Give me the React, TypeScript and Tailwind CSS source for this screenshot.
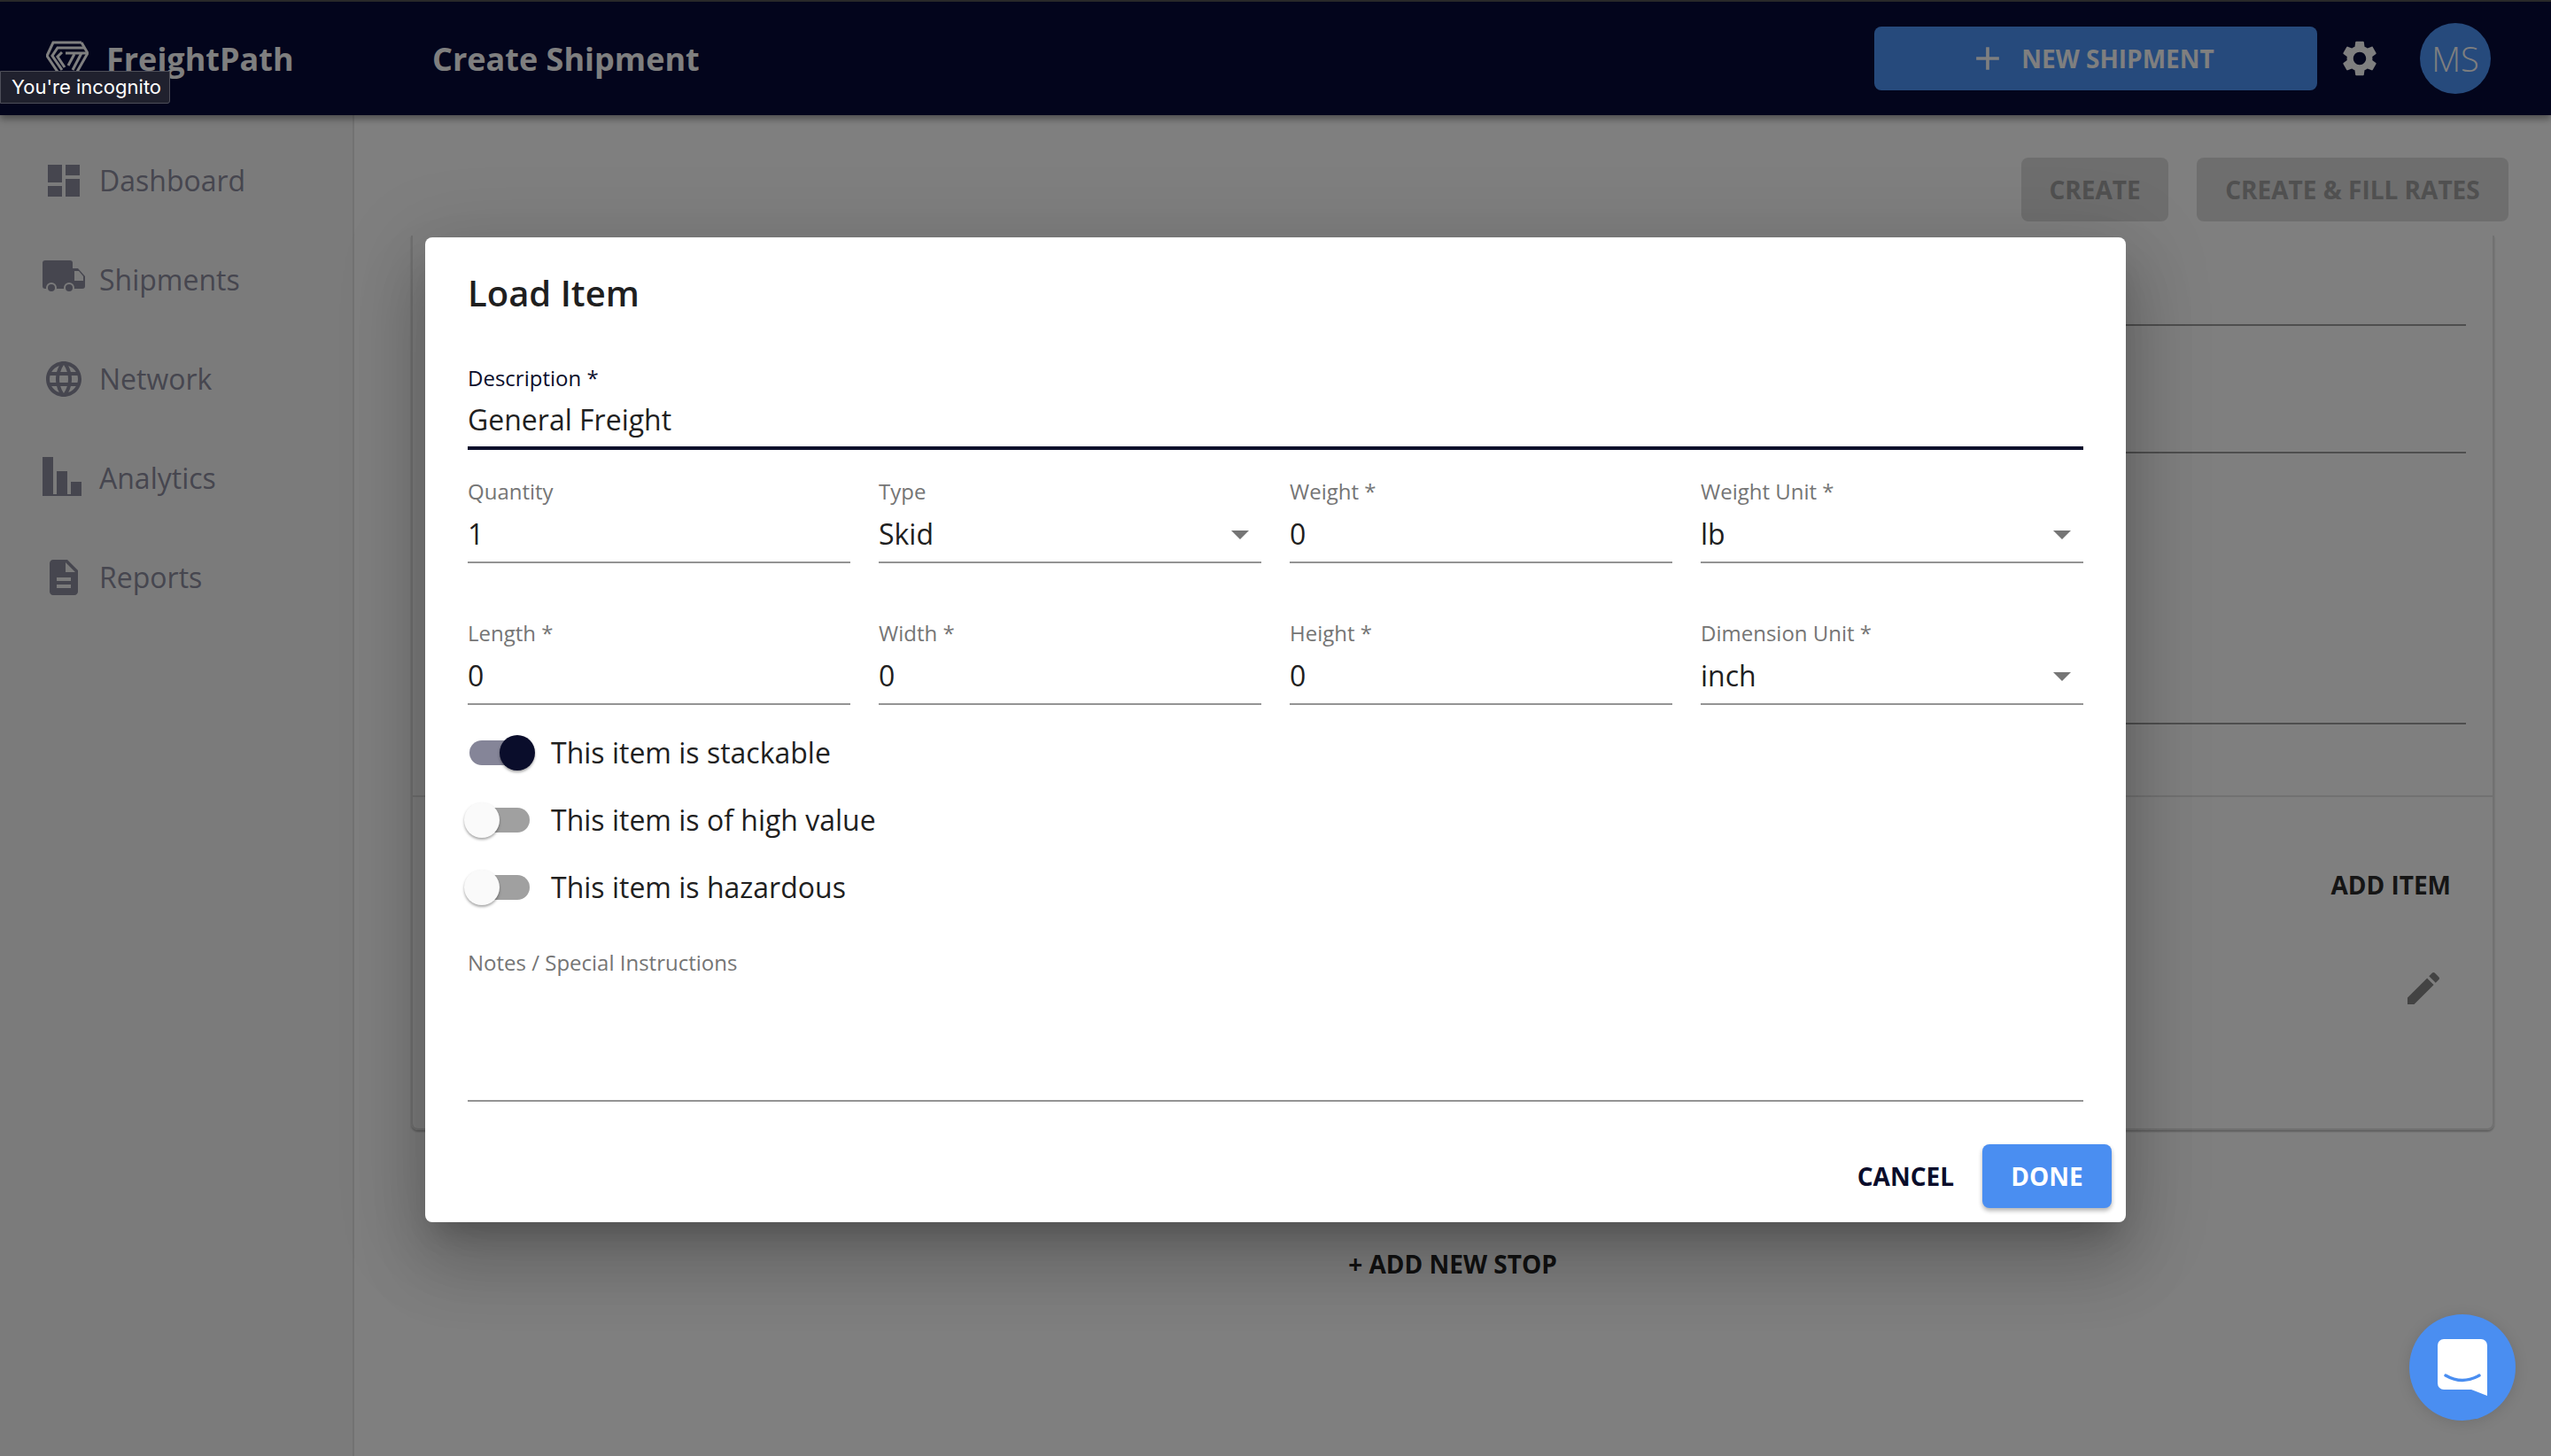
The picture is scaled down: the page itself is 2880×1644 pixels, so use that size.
import React from "react";

const navItems = [
  { label: "Dashboard", icon: <DashboardIcon /> },
  { label: "Shipments", icon: <TruckIcon /> },
  { label: "Network", icon: <GlobeIcon /> },
  { label: "Analytics", icon: <BarsIcon /> },
  { label: "Reports", icon: <ReportIcon /> },
];

function DashboardIcon() {
  return (
    <svg viewBox="0 0 24 24" className="w-12 h-12 fill-[#8c8c9e]">
      <path d="M3 13h8V3H3v10zm0 8h8v-6H3v6zm10 0h8V11h-8v10zm0-18v6h8V3h-8z" />
    </svg>
  );
}

function TruckIcon() {
  return (
    <svg viewBox="0 0 48 48" className="w-12 h-12 fill-[#8c8c9e]">
      <g transform="translate(0 2)">
        <path d="M3 0h28a3 3 0 0 1 3 3v29H3a3 3 0 0 1-3-3V3a3 3 0 0 1 3-3z" />
        <path fillRule="evenodd" d="M34 9h6l8 9v11a3 3 0 0 1-3 3H34V9zm2 3v11h10v-5l-5-6h-5z" />
        <circle cx="10" cy="31" r="6" className="fill-[#f6f6f6]" />
        <circle cx="30" cy="31" r="6" className="fill-[#f6f6f6]" />
        <circle cx="10" cy="31" r="4" />
        <circle cx="30" cy="31" r="4" />
      </g>
    </svg>
  );
}

function GlobeIcon() {
  return (
    <svg viewBox="0 0 24 24" className="w-12 h-12 fill-[#8c8c9e]">
      <path d="M11.99 2C6.47 2 2 6.48 2 12s4.47 10 9.99 10C17.52 22 22 17.52 22 12S17.52 2 11.99 2zm6.93 6h-2.95c-.32-1.25-.78-2.45-1.38-3.56 1.84.63 3.37 1.91 4.33 3.56zM12 4.04c.83 1.2 1.48 2.53 1.91 3.96h-3.82c.43-1.43 1.08-2.76 1.91-3.96zM4.26 14C4.1 13.36 4 12.69 4 12s.1-1.36.26-2h3.38c-.08.66-.14 1.32-.14 2 0 .68.06 1.34.14 2H4.26zm.82 2h2.95c.32 1.25.78 2.45 1.38 3.56-1.84-.63-3.37-1.9-4.33-3.56zm2.95-8H5.08c.96-1.66 2.49-2.93 4.33-3.56C8.81 5.55 8.35 6.75 8.03 8zM12 19.96c-.83-1.2-1.48-2.53-1.91-3.96h3.82c-.43 1.43-1.08 2.76-1.91 3.96zM14.34 14H9.66c-.09-.66-.16-1.32-.16-2 0-.68.07-1.35.16-2h4.68c.09.65.16 1.32.16 2 0 .68-.07 1.34-.16 2zm.25 5.56c.6-1.11 1.06-2.31 1.38-3.56h2.95c-.96 1.65-2.49 2.93-4.33 3.56zM16.36 14c.08-.66.14-1.32.14-2 0-.68-.06-1.34-.14-2h3.38c.16.64.26 1.31.26 2s-.1 1.36-.26 2h-3.38z" />
    </svg>
  );
}

function BarsIcon() {
  return (
    <svg viewBox="0 0 48 48" className="w-12 h-12 fill-[#8c8c9e]">
      <path d="M0 0h12v42h4V16h12v26h4V28h12v16H0z" />
    </svg>
  );
}

function ReportIcon() {
  return (
    <svg viewBox="0 0 24 24" className="w-12 h-12 fill-[#8c8c9e]">
      <path d="M14 2H6c-1.1 0-1.99.9-1.99 2L4 20c0 1.1.89 2 1.99 2H18c1.1 0 2-.9 2-2V8l-6-6zm2 16H8v-2h8v2zm0-4H8v-2h8v2zm-3-5V3.5L18.5 9H13z" />
    </svg>
  );
}

function Logo() {
  return (
    <svg viewBox="0 0 48 40" className="w-12 h-10 fill-none stroke-white" strokeWidth="3">
      <path d="M40 2H8L1 17L13 35" />
      <path d="M43 8H13L7 17L18 33" />
      <path d="M18 13L13 18L21 30" />
      <path d="M40 2L47 14L35 35" />
      <path d="M22 14H47" />
      <path d="M40 14L30 33" />
      <path d="M32 15L25 28" />
    </svg>
  );
}

function Field({ label, value, select }: { label: string; value: string; select?: boolean }) {
  return (
    <div className="flex flex-col border-b-2 border-[#949494]">
      <div className="text-[24px] leading-[30px] text-[#757575]">{label}</div>
      <div className="mt-[11px] mb-[9px] h-[44px] flex items-center justify-between text-[32px] leading-[44px] text-[#1f1f1f]">
        <span>{value}</span>
        {select && (
          <svg viewBox="0 0 24 24" className="w-12 h-12 fill-[#757575] shrink-0">
            <path d="M7 10l5 5 5-5z" />
          </svg>
        )}
      </div>
    </div>
  );
}

function Toggle({ label, on }: { label: string; on?: boolean }) {
  return (
    <div className="h-[76px] flex items-center">
      <div className="relative w-[94px] h-[40px] shrink-0">
        <div className={`absolute left-[2px] top-[6px] w-[68px] h-[28px] rounded-full ${on ? "bg-[#858598]" : "bg-[#a0a0a0]"}`} />
        <div
          className={`absolute top-0 w-[40px] h-[40px] rounded-full shadow-[0_2px_3px_rgba(0,0,0,0.35)] ${
            on ? "left-[36px] bg-[#0a0d2b]" : "-left-[4px] bg-[#fafafa]"
          }`}
        />
      </div>
      <span className="text-[32px] leading-[44px] text-[#1f1f1f]">{label}</span>
    </div>
  );
}

function LoadItemDialog() {
  return (
    <div className="absolute inset-0 flex justify-center pt-[268px]">
      <div className="w-[1920px] h-[1112px] bg-white rounded-lg shadow-[0_22px_30px_-14px_rgba(0,0,0,0.2),0_48px_76px_6px_rgba(0,0,0,0.14),0_18px_92px_16px_rgba(0,0,0,0.12)]">
        <div className="px-12 pt-[35px]">
          <h2 className="text-[40px] leading-[56px] font-semibold text-[#1f1f1f]">Load Item</h2>

          <div className="mt-[52px] flex flex-col border-b-4 border-[#0a0d2b]">
            <div className="text-[24px] leading-[32px] text-[#0a0d2b]">Description *</div>
            <div className="mt-[9px] mb-2 text-[32px] leading-[44px] text-[#1f1f1f]">General Freight</div>
          </div>

          <div className="mt-8 grid grid-cols-4 gap-x-8 gap-y-16">
            <Field label="Quantity" value="1" />
            <Field label="Type" value="Skid" select />
            <Field label="Weight *" value="0" />
            <Field label="Weight Unit *" value="lb" select />
            <Field label="Length *" value="0" />
            <Field label="Width *" value="0" />
            <Field label="Height *" value="0" />
            <Field label="Dimension Unit *" value="inch" select />
          </div>

          <div className="mt-4 flex flex-col">
            <Toggle label="This item is stackable" on />
            <Toggle label="This item is of high value" />
            <Toggle label="This item is hazardous" />
          </div>

          <div className="mt-8 h-[172px] border-b-2 border-[#949494] text-[24px] leading-[30px] text-[#757575]">
            Notes / Special Instructions
          </div>
        </div>

        <div className="mt-12 px-4 flex justify-end items-center">
          <button className="px-8 h-[72px] text-[28px] font-bold text-[#0a0d2b]">CANCEL</button>
          <button className="w-[146px] h-[72px] rounded-lg bg-[#4a8ef1] text-[28px] font-bold text-white shadow-[0_3px_5px_rgba(0,0,0,0.3)]">
            DONE
          </button>
        </div>
      </div>
    </div>
  );
}

export default function App() {
  return (
    <div className="relative w-[2880px] h-[1644px] overflow-hidden bg-white font-['Open_Sans',sans-serif]">
      <div className="h-[2px] bg-[#2b2b2b]" />
      <header className="relative h-[128px] bg-[#060a38] flex items-center pl-[52px] pr-[68px] shadow-[0_4px_8px_rgba(0,0,0,0.4)] z-10">
        <Logo />
        <span className="ml-[20px] w-[368px] pt-[2px] text-[36px] font-bold text-white">FreightPath</span>
        <span className="pt-[2px] text-[36px] font-bold text-white">Create Shipment</span>
        <div className="ml-auto flex items-center">
          <button className="w-[500px] h-[72px] pr-[10px] rounded-lg bg-[#4c94f8] flex items-center justify-center gap-[16px] text-[28px] font-bold text-white">
            <svg viewBox="0 0 24 24" className="w-[44px] h-[44px] fill-white">
              <path d="M19 13h-6v6h-2v-6H5v-2h6V5h2v6h6v2z" />
            </svg>
            NEW SHIPMENT
          </button>
          <svg viewBox="0 0 24 24" className="ml-6 w-12 h-12 fill-white">
            <path d="M19.14 12.94c.04-.3.06-.61.06-.94 0-.32-.02-.64-.07-.94l2.03-1.58c.18-.14.23-.41.12-.61l-1.92-3.32c-.12-.22-.37-.29-.59-.22l-2.39.96c-.5-.38-1.03-.7-1.62-.94l-.36-2.54c-.04-.24-.24-.41-.48-.41h-3.84c-.24 0-.43.17-.47.41l-.36 2.54c-.59.24-1.13.57-1.62.94l-2.39-.96c-.22-.08-.47 0-.59.22L2.74 8.87c-.12.21-.08.47.12.61l2.03 1.58c-.05.3-.09.63-.09.94s.02.64.07.94l-2.03 1.58c-.18.14-.23.41-.12.61l1.92 3.32c.12.22.37.29.59.22l2.39-.96c.5.38 1.03.7 1.62.94l.36 2.54c.05.24.24.41.48.41h3.84c.24 0 .44-.17.47-.41l.36-2.54c.59-.24 1.13-.56 1.62-.94l2.39.96c.22.08.47 0 .59-.22l1.92-3.32c.12-.22.07-.47-.12-.61l-2.01-1.58zM12 15.6c-1.98 0-3.6-1.62-3.6-3.6s1.62-3.6 3.6-3.6 3.6 1.62 3.6 3.6-1.62 3.6-3.6 3.6z" />
          </svg>
          <div className="ml-11 w-20 h-20 rounded-full bg-[#4c94f8] flex items-center justify-center text-[38px] font-light text-white">
            MS
          </div>
        </div>
      </header>

      <div className="flex h-[1514px]">
        <aside className="w-[400px] shrink-0 bg-[#f6f6f6] border-r-2 border-[#e4e4e4] pt-[18px]">
          {navItems.map((item) => (
            <div key={item.label} className="h-[112px] pl-12 flex items-center gap-4">
              {item.icon}
              <span className="text-[32px] text-[#8c8c9e]">{item.label}</span>
            </div>
          ))}
        </aside>

        <main className="flex-1 flex flex-col bg-white">
          <div className="pt-12 pr-12 flex justify-end gap-8">
            <button className="w-[166px] h-[72px] rounded-lg bg-[#dcdcdc] text-[28px] font-bold text-[#a0a0a0]">CREATE</button>
            <button className="w-[352px] h-[72px] rounded-lg bg-[#dcdcdc] text-[28px] font-bold text-[#a0a0a0]">CREATE &amp; FILL RATES</button>
          </div>

          <section className="mt-4 mx-16 h-[1010px] px-[30px] border-x-2 border-b-2 border-[#e2e2e2] rounded-b-lg shadow-[0_2px_2px_rgba(0,0,0,0.25)]">
            <div className="h-[102px] border-b-2 border-[#9c9c9c]" />
            <div className="h-[144px] border-b-2 border-[#9c9c9c]" />
            <div className="h-[306px] border-b-2 border-[#9c9c9c]" />
            <div className="-mx-[30px] h-[82px] border-b-2 border-[#e2e2e2]" />
            <div className="pt-[79px] pr-[17px] flex justify-end text-[28px] leading-[40px] font-bold text-[#2a2a2a]">ADD ITEM</div>
            <div className="mt-[73px] pr-6 flex justify-end">
              <svg viewBox="0 0 24 24" className="w-12 h-12 fill-[#868686]">
                <path d="M3 17.25V21h3.75L17.81 9.94l-3.75-3.75L3 17.25zM20.71 7.04c.39-.39.39-1.02 0-1.41l-2.34-2.34c-.39-.39-1.02-.39-1.41 0l-1.83 1.83 3.75 3.75 1.83-1.83z" />
              </svg>
            </div>
          </section>

          <div className="mt-[131px] mx-16 text-center text-[28px] leading-[40px] font-bold text-[#222222]">+ ADD NEW STOP</div>
        </main>
      </div>

      {/* Backdrop dims everything below the dialog */}
      <div className="absolute inset-0 top-[2px] bg-black/50 z-20" />
      <div className="absolute inset-0 z-30 pointer-events-none">
        <LoadItemDialog />
      </div>

      <div className="absolute left-0 top-[80px] w-[192px] h-[37px] z-40 bg-[#20212e] border border-[#4e4f59] rounded-br-[3px] pl-3 flex items-center text-[22px] text-white font-['Inter',sans-serif]">
        You're incognito
      </div>

      <div className="absolute left-[2720px] top-[1484px] w-[120px] h-[120px] z-40 rounded-full bg-[#4a8ef1] flex items-center justify-center shadow-[0_2px_16px_rgba(0,0,0,0.12)]">
        <svg viewBox="0 0 56 64" className="w-14 h-16">
          <path className="fill-white" d="M7 0H49a7 7 0 0 1 7 7V64L38 57H7a7 7 0 0 1-7-7V7a7 7 0 0 1 7-7z" />
          <path className="fill-none stroke-[#4a8ef1]" strokeWidth="3.4" strokeLinecap="round" d="M9 41Q28 52 47 41" />
        </svg>
      </div>
    </div>
  );
}
